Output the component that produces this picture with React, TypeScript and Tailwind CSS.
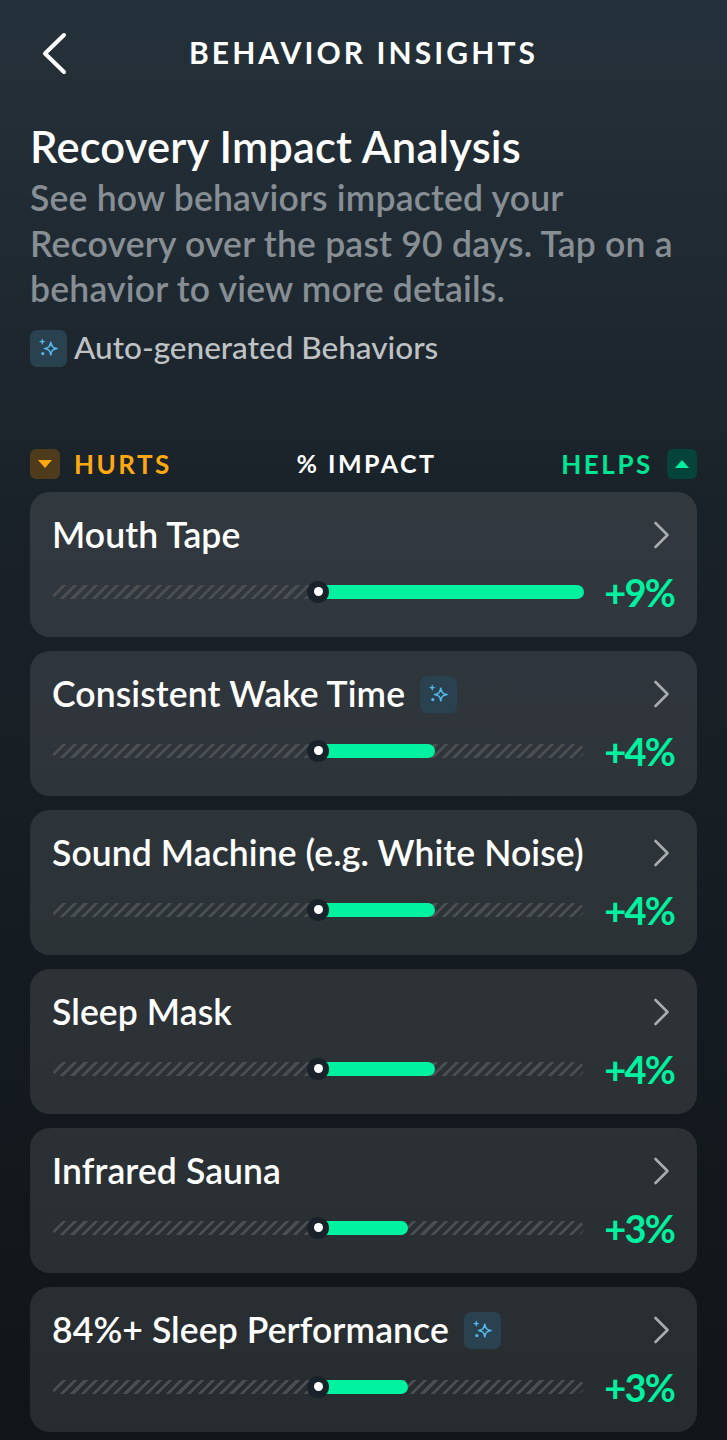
const behaviors = [
  { name: "Mouth Tape", pct: 9, auto: false },
  { name: "Consistent Wake Time", pct: 4, auto: true },
  { name: "Sound Machine (e.g. White Noise)", pct: 4, auto: false },
  { name: "Sleep Mask", pct: 4, auto: false },
  { name: "Infrared Sauna", pct: 3, auto: false },
  { name: "84%+ Sleep Performance", pct: 3, auto: true },
];

// px per percent point, read off the bars
const barWidth = (pct: number) => (pct === 9 ? 266 : pct === 4 ? 117 : 90);

const Sparkle = () => (
  <span className="w-[37px] h-[37px] shrink-0 rounded-[7px] bg-[#2a4150] flex items-center justify-center">
    <svg width="25" height="25" viewBox="0 0 22 22" fill="none">
      <path
        d="M13 5.5 C13.6 9.2 14.8 10.4 18.5 11 C14.8 11.6 13.6 12.8 13 16.5 C12.4 12.8 11.2 11.6 7.5 11 C11.2 10.4 12.4 9.2 13 5.5 Z"
        stroke="#55b6ea"
        strokeWidth="1.4"
        strokeLinejoin="round"
      />
      <path
        d="M5.5 2 L6.3 4.2 L8.5 5 L6.3 5.8 L5.5 8 L4.7 5.8 L2.5 5 L4.7 4.2 Z"
        fill="#55b6ea"
      />
      <circle cx="6" cy="15.5" r="1.4" fill="#55b6ea" />
    </svg>
  </span>
);

const BehaviorCard = ({ name, pct, auto }: { name: string; pct: number; auto: boolean }) => (
  <div className="h-[145px] rounded-[20px] bg-white/10 pl-[22px] pr-[23px] pt-[22px]">
    <div className="flex items-center h-[43px]">
      <span className="text-[35.5px] leading-none font-semibold tracking-[0.1px] text-white whitespace-nowrap">{name}</span>
      {auto && (
        <span className="ml-[15px]">
          <Sparkle />
        </span>
      )}
      <svg className="ml-auto mr-[4px] shrink-0" width="17" height="28" viewBox="0 0 17 28" fill="none">
        <path d="M2.5 2 L14.5 14 L2.5 26" stroke="#a9acae" strokeWidth="2.6" strokeLinecap="round" strokeLinejoin="round" />
      </svg>
    </div>
    <div className="flex items-center mt-[15px] h-[40px]">
      <div className="relative w-[532px] h-[14px] rounded-full bg-[repeating-linear-gradient(135deg,#4a4e51_0px,#4a4e51_3px,transparent_3px,transparent_7.5px)]">
        <div
          className="absolute left-[266px] top-0 h-[14px] rounded-r-full bg-[#00f19f]"
          style={{ width: barWidth(pct) }}
        />
        <div className="absolute left-[255px] top-[-4px] w-[22px] h-[22px] rounded-full bg-[#19222a] flex items-center justify-center">
          <div className="w-[9px] h-[9px] rounded-full bg-white" />
        </div>
      </div>
      <span className="ml-auto text-[38px] leading-none font-bold text-[#00f19f] tracking-[-1.8px]">
        +{pct}%
      </span>
    </div>
  </div>
);

export default function App() {
  return (
    <div className="w-[727px] h-[1440px] overflow-hidden bg-[linear-gradient(180deg,#25313a_0%,#1a2229_35%,#0f1518_100%)] font-['Lato','Noto_Sans',sans-serif]">
      <header className="relative h-[104px] flex items-center justify-center">
        <svg className="absolute left-[40px] top-[31px]" width="28" height="45" viewBox="0 0 28 45" fill="none">
          <path d="M24 4 L5 22.5 L24 41" stroke="white" strokeWidth="4" strokeLinecap="round" strokeLinejoin="round" />
        </svg>
        <h1 className="text-[30px] font-bold tracking-[3.1px] text-white leading-none">BEHAVIOR INSIGHTS</h1>
      </header>

      <section className="px-[30px]">
        <h2 className="text-[43.5px] leading-[46px] font-semibold text-white mt-[19px] tracking-[0.2px]">Recovery Impact Analysis</h2>
        <p className="text-[35.5px] leading-[45.5px] font-semibold text-[#878e94] mt-[6px] tracking-[0.2px]">
          See how behaviors impacted your
          <br />
          Recovery over the past 90 days. Tap on a
          <br />
          behavior to view more details.
        </p>
        <div className="flex items-center gap-[7px] mt-[18px]">
          <Sparkle />
          <span className="text-[31.5px] leading-none font-medium text-[#bfc2c5]">Auto-generated Behaviors</span>
        </div>
      </section>

      <div className="flex items-center justify-between px-[30px] mt-[81px] h-[32px]">
        <div className="flex items-center gap-[14px]">
          <span className="w-[30px] h-[30px] rounded-[6px] bg-[#4d3b1c] flex items-center justify-center">
            <span className="w-0 h-0 border-x-[7px] border-x-transparent border-t-[8px] border-t-[#ffa812]" />
          </span>
          <span className="text-[26px] leading-none font-bold tracking-[2.5px] text-[#ffa812]">HURTS</span>
        </div>
        <span className="text-[25px] leading-none font-bold tracking-[2.5px] text-white">% IMPACT</span>
        <div className="flex items-center gap-[14px]">
          <span className="text-[26px] leading-none font-bold tracking-[2.6px] text-[#00e594]">HELPS</span>
          <span className="w-[30px] h-[30px] rounded-[6px] bg-[#06433a] flex items-center justify-center">
            <span className="w-0 h-0 border-x-[7px] border-x-transparent border-b-[8px] border-b-[#00f19f]" />
          </span>
        </div>
      </div>

      <div className="flex flex-col gap-[14px] px-[30px] mt-[12px]">
        {behaviors.map((b) => (
          <BehaviorCard key={b.name} {...b} />
        ))}
      </div>
    </div>
  );
}
